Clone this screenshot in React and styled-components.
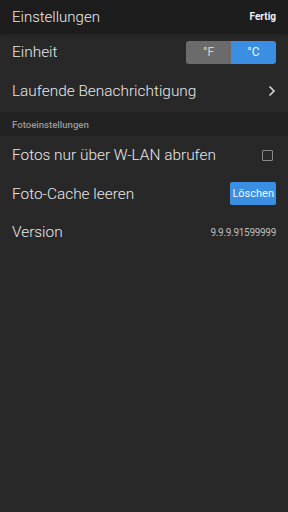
import React from 'react';
import styled, { createGlobalStyle } from 'styled-components';

const GlobalStyle = createGlobalStyle`
  html, body {
    margin: 0;
    padding: 0;
    background: #282828;
  }
  * { box-sizing: border-box; }
`;

const Screen = styled.div`
  width: 288px;
  height: 512px;
  background: #282828;
  font-family: Roboto, 'Noto Sans', sans-serif;
  color: #e6e6e6;
  overflow: hidden;
`;

const Header = styled.div`
  height: 33px;
  background: #1d1d1d;
  display: flex;
  align-items: center;
  justify-content: space-between;
  padding: 0 12px 0 12px;
  box-shadow: 0 1px 3px rgba(0, 0, 0, 0.35);
`;

const Title = styled.div`
  font-size: 15px;
  font-weight: 300;
  color: #ededed;
`;

const Done = styled.div`
  font-size: 10px;
  font-weight: 700;
  color: #f2f2f2;
`;

const Row = styled.div`
  height: 38.5px;
  display: flex;
  align-items: center;
  justify-content: space-between;
  padding: 0 12px;
`;

const Label = styled.div`
  font-size: 15.4px;
  font-weight: 300;
  color: #e8e8e8;
`;

const Section = styled.div`
  height: 24px;
  background: #222222;
  display: flex;
  align-items: center;
  padding: 0 12px;
  font-size: 9.6px;
  font-weight: 500;
  color: #9a9a9a;
  margin-top: 2px;
`;

const Segmented = styled.div`
  display: flex;
  width: 90px;
  height: 23px;
  border-radius: 3px;
  overflow: hidden;
`;

const Segment = styled.div`
  flex: 1;
  display: flex;
  align-items: center;
  justify-content: center;
  font-size: 12px;
  font-weight: 400;
  color: ${(p) => (p.active ? '#eaf3ff' : '#d0d0d0')};
  background: ${(p) => (p.active ? '#3b8fe3' : '#6b6b6b')};
`;

const Checkbox = styled.div`
  width: 11px;
  height: 11px;
  border: 1px solid #8a8a8a;
  border-radius: 1px;
  margin-right: 3px;
`;

const Button = styled.div`
  height: 23px;
  padding: 0 2px;
  background: #3b8fe3;
  border-radius: 2px;
  display: flex;
  align-items: center;
  font-size: 11px;
  color: #f2f7ff;
`;

const Value = styled.div`
  font-size: 10px;
  color: #bdbdbd;
  letter-spacing: -0.3px;
`;

const Chevron = () => (
  <svg width="8" height="12" viewBox="0 0 8 12">
    <path d="M1.5 1.5 L6 6 L1.5 10.5" fill="none" stroke="#d8d8d8" strokeWidth="1.6" />
  </svg>
);

export default function App() {
  return (
    <Screen>
      <GlobalStyle />
      <Header>
        <Title>Einstellungen</Title>
        <Done>Fertig</Done>
      </Header>
      <Row>
        <Label>Einheit</Label>
        <Segmented>
          <Segment>°F</Segment>
          <Segment active>°C</Segment>
        </Segmented>
      </Row>
      <Row>
        <Label>Laufende Benachrichtigung</Label>
        <Chevron />
      </Row>
      <Section>Fotoeinstellungen</Section>
      <Row>
        <Label>Fotos nur über W-LAN abrufen</Label>
        <Checkbox />
      </Row>
      <Row>
        <Label>Foto-Cache leeren</Label>
        <Button>Löschen</Button>
      </Row>
      <Row>
        <Label>Version</Label>
        <Value>9.9.9.91599999</Value>
      </Row>
    </Screen>
  );
}
